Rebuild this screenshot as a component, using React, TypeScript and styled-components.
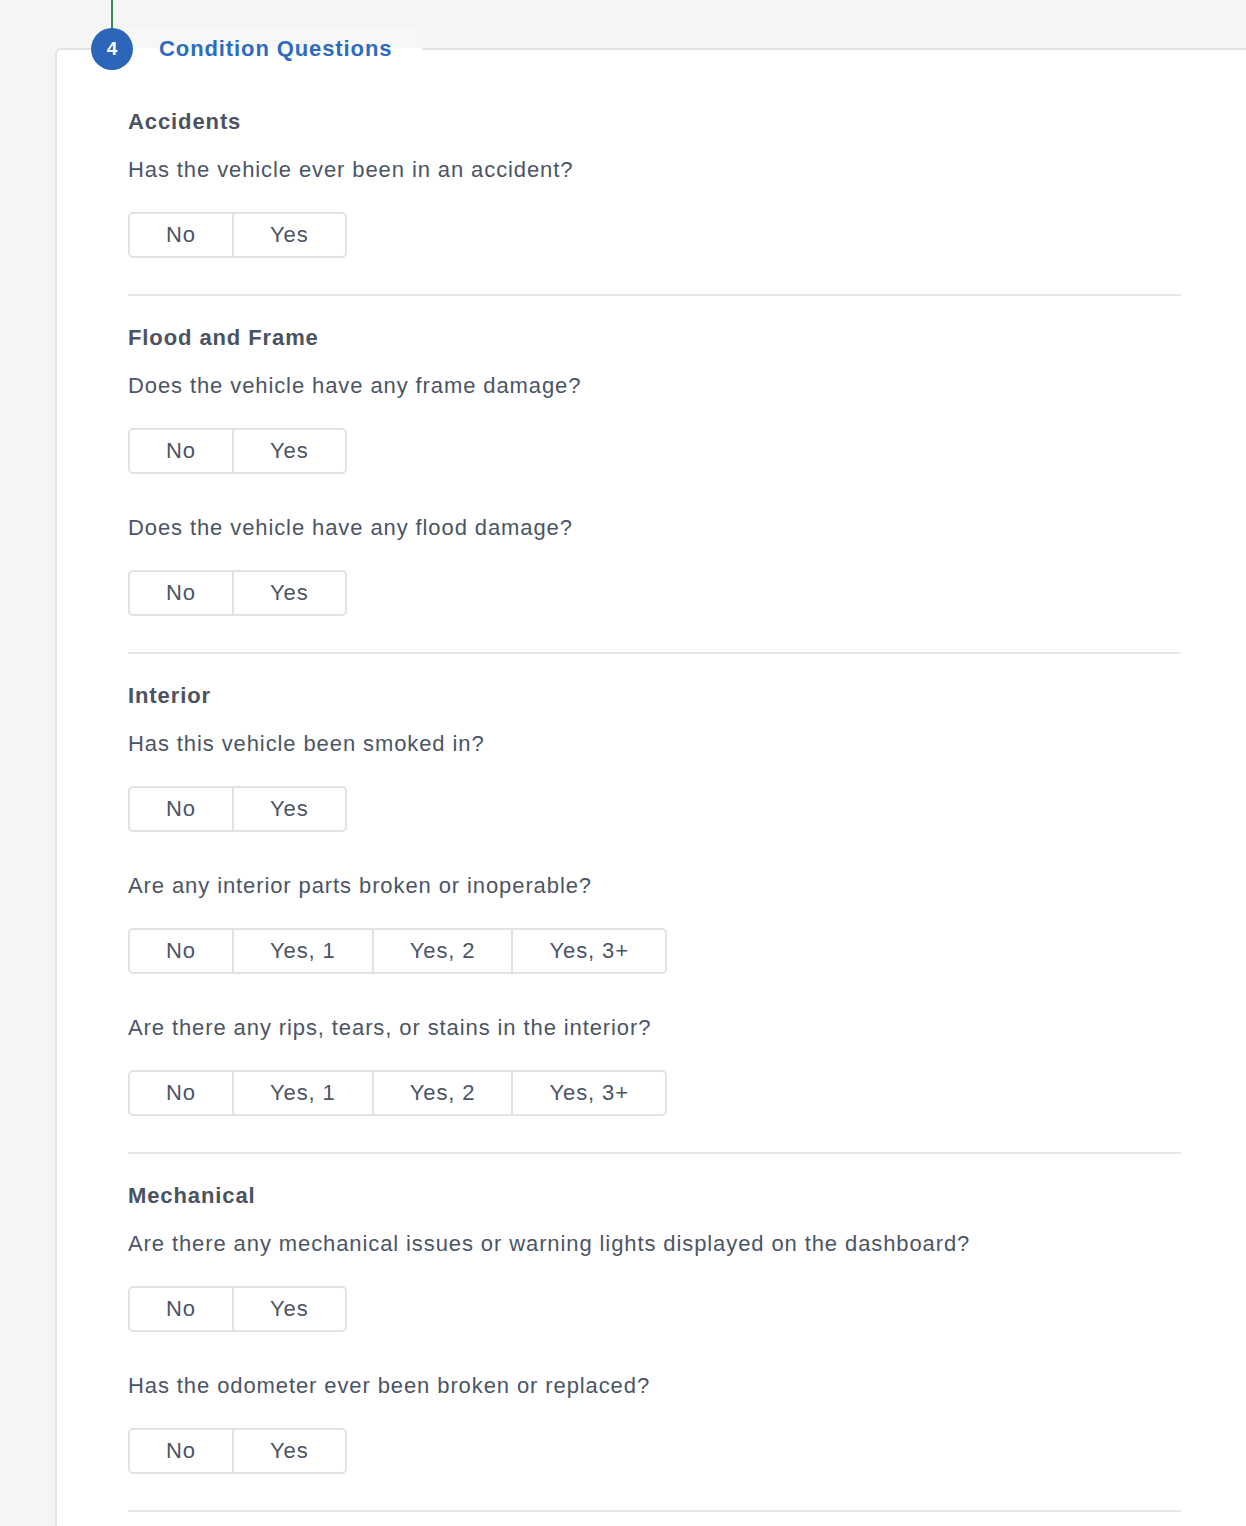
import styled, { createGlobalStyle } from 'styled-components';

interface questionProp {
  text: string;
  options: string[];
}

interface sectionProp {
  title: string;
  questions: questionProp[];
}

const yesNo = ['No', 'Yes'];
const counts = ['No', 'Yes, 1', 'Yes, 2', 'Yes, 3+'];

const sections: sectionProp[] = [
  {
    title: 'Accidents',
    questions: [{ text: 'Has the vehicle ever been in an accident?', options: yesNo }],
  },
  {
    title: 'Flood and Frame',
    questions: [
      { text: 'Does the vehicle have any frame damage?', options: yesNo },
      { text: 'Does the vehicle have any flood damage?', options: yesNo },
    ],
  },
  {
    title: 'Interior',
    questions: [
      { text: 'Has this vehicle been smoked in?', options: yesNo },
      { text: 'Are any interior parts broken or inoperable?', options: counts },
      { text: 'Are there any rips, tears, or stains in the interior?', options: counts },
    ],
  },
  {
    title: 'Mechanical',
    questions: [
      {
        text: 'Are there any mechanical issues or warning lights displayed on the dashboard?',
        options: yesNo,
      },
      { text: 'Has the odometer ever been broken or replaced?', options: yesNo },
    ],
  },
];

const GlobalStyle = createGlobalStyle`
  html, body {
    margin: 0;
    padding: 0;
    background: #f5f5f5;
    overflow: hidden;
  }
  body {
    font-family: "Liberation Sans", Arial, sans-serif;
    color: #4b5565;
    letter-spacing: 0.9px;
  }
`;

const Page = styled.div`
  padding: 48px 0 0 55px;
  height: 1478px;
`;

const Panel = styled.div`
  width: 1199px;
  height: 100%;
  background: #ffffff;
  border-top: 2px solid #e4e4e4;
  border-left: 2px solid #e4e4e4;
  border-top-left-radius: 6px;
  padding: 0 73px 0 71px;
  box-sizing: border-box;
`;

const Header = styled.div`
  display: flex;
  align-items: center;
  width: fit-content;
  height: 42px;
  margin: -22px 0 0 -37px;
  padding-right: 30px;
  background: linear-gradient(#f7f7f7 0 20px, #ffffff 20px);
`;

const StepNumber = styled.div`
  position: relative;
  display: flex;
  align-items: center;
  justify-content: center;
  width: 42px;
  height: 42px;
  border-radius: 50%;
  background: #2c66b8;
  color: #ffffff;
  font-size: 19px;
  font-weight: 700;
  letter-spacing: 0;
  &::before {
    content: '';
    position: absolute;
    left: 20px;
    bottom: 100%;
    width: 2px;
    height: 40px;
    background: #3d8a4c;
  }
`;

const StepTitle = styled.h2`
  margin: 0 0 0 26px;
  font-size: 22px;
  font-weight: 700;
  color: #2d6bbf;
`;

const Section = styled.section`
  padding: 28px 0 36px;
  border-bottom: 2px solid #e6e6e6;
  &:first-of-type {
    padding-top: 38px;
  }
`;

const SectionTitle = styled.h3`
  margin: 0 0 20px;
  font-size: 22px;
  line-height: 28px;
  font-weight: 700;
  color: #4a5263;
`;

const Questions = styled.div`
  display: flex;
  flex-direction: column;
  gap: 40px;
`;

const Question = styled.div`
  display: flex;
  flex-direction: column;
  align-items: flex-start;
`;

const QuestionText = styled.p`
  margin: 0 0 28px;
  font-size: 22px;
  line-height: 28px;
  color: #4b5565;
`;

const Options = styled.div`
  display: flex;
  border: 2px solid #e3e3e3;
  border-radius: 5px;
  background: #ffffff;
`;

const Option = styled.button`
  height: 42px;
  padding: 0 36px;
  border: 0;
  border-left: 2px solid #e3e3e3;
  background: transparent;
  font-family: inherit;
  font-size: 22px;
  letter-spacing: 0.9px;
  color: #4b5565;
  cursor: pointer;
  &:first-child {
    border-left: 0;
  }
`;

export default function App() {
  return (
    <>
      <GlobalStyle />
      <Page>
        <Panel>
          <Header>
            <StepNumber>4</StepNumber>
            <StepTitle>Condition Questions</StepTitle>
          </Header>
          {sections.map((section) => (
            <Section key={section.title}>
              <SectionTitle>{section.title}</SectionTitle>
              <Questions>
                {section.questions.map((q) => (
                  <Question key={q.text}>
                    <QuestionText>{q.text}</QuestionText>
                    <Options>
                      {q.options.map((o) => (
                        <Option key={o}>{o}</Option>
                      ))}
                    </Options>
                  </Question>
                ))}
              </Questions>
            </Section>
          ))}
        </Panel>
      </Page>
    </>
  );
}
